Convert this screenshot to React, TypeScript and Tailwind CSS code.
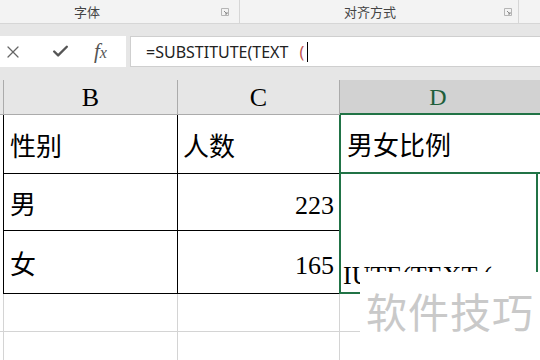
import { Check, X } from "lucide-react";

const SERIF = "font-['Liberation_Serif','Noto_Sans_CJK_SC',serif]";

function Launcher() {
  return (
    <svg width="8" height="8" viewBox="0 0 8 8" className="shrink-0">
      <path d="M0.5 0.5h7v7" fill="none" stroke="#b5b5b5" />
      <path d="M0.5 0.5v7h7" fill="none" stroke="#b5b5b5" />
      <path d="M3 3l3 3M6 4v2H4" fill="none" stroke="#8a8a8a" />
    </svg>
  );
}

function Ribbon() {
  return (
    <div className="flex h-[24px] bg-[#f3f3f3] border-b border-[#d6d6d6] text-[13px] text-[#444] font-['Noto_Sans_CJK_SC',sans-serif]">
      <div className="flex w-[240px] items-center border-r border-[#d6d6d6] pl-[74px] pr-[10px]">
        <span className="leading-none">字体</span>
        <span className="ml-auto">
          <Launcher />
        </span>
      </div>
      <div className="flex w-[279px] items-center border-r border-[#d6d6d6] pl-[104px] pr-[6px]">
        <span className="leading-none">对齐方式</span>
        <span className="ml-auto">
          <Launcher />
        </span>
      </div>
      <div className="flex-1" />
    </div>
  );
}

function FormulaBar() {
  return (
    <div className="flex h-[31px] bg-[#e6e6e6]">
      <div className="flex w-[126px] items-center bg-white text-[#666]">
        <X size={20} strokeWidth={1.5} className="ml-[3px]" />
        <Check size={19} strokeWidth={3} className="ml-[28px] text-[#555]" />
        <span className="ml-[24px] font-['Liberation_Serif',serif] text-[21px] italic text-[#555]">
          f<span className="text-[16px]">x</span>
        </span>
      </div>
      <div className="ml-[4px] flex flex-1 items-center border-y border-l border-[#cfcfcf] bg-white pl-[15px] font-['Noto_Sans',sans-serif] text-[16px] text-[#222]">
        <span>=SUBSTITUTE(TEXT</span>
        <span className="ml-[11px] text-[#c0504d]">(</span>
        <span className="ml-[3px] h-[20px] w-px bg-black" />
      </div>
    </div>
  );
}

function HeaderRow() {
  return (
    <div className={`flex h-[35px] bg-[#e6e6e6] text-[26px] ${SERIF} text-black`}>
      <div className="w-[4px] border-r border-b border-[#ababab]" />
      <div className="flex w-[174px] items-center justify-center border-r border-b border-[#ababab]">B</div>
      <div className="flex w-[162px] items-center justify-center border-r border-b border-[#ababab]">C</div>
      <div className="flex flex-1 items-center justify-center border-b-2 border-[#217346] bg-[#d2d2d2] pr-[4px] text-[24px] text-[#1e5e3a]">
        D
      </div>
    </div>
  );
}

type Row = { b: string; c: string; h: string };

const ROWS: Row[] = [
  { b: "性别", c: "人数", h: "h-[59px]" },
  { b: "男", c: "223", h: "h-[57px]" },
  { b: "女", c: "165", h: "h-[63px]" },
];

export default function App() {
  return (
    <div className="relative h-[360px] w-[540px] overflow-hidden bg-white">
      <Ribbon />
      <div className="h-[12px] bg-[#e6e6e6]" />
      <FormulaBar />
      <div className="h-[13px] bg-[#e6e6e6]" />
      <HeaderRow />

      <div className={`${SERIF} text-[26px] text-black`}>
        {ROWS.map((r, i) => (
          <div key={r.b} className={`flex ${r.h}`}>
            <div className="w-[4px] border-r border-black" />
            <div className="flex w-[174px] items-center border-r border-b border-black pl-[6px]">
              <span className="mt-[6px]">{r.b}</span>
            </div>
            <div
              className={`flex w-[162px] items-center border-r border-b border-black ${
                i === 0 ? "pl-[5px]" : "justify-end pr-[5px]"
              }`}
            >
              <span className="mt-[6px]">{r.c}</span>
            </div>
            {i === 0 && (
              <div className="-ml-px flex flex-1 items-center border-2 border-r-0 border-t-0 border-[#217346] pl-[6px]">
                <span className="mt-[6px]">男女比例</span>
              </div>
            )}
            {i === 1 && <div className="-ml-px mr-[2px] flex-1 border-x-2 border-[#217346]" />}
            {i === 2 && (
              <div className="-ml-px mr-[2px] flex flex-1 items-end overflow-hidden border-x-2 border-b-2 border-[#217346]">
                <span className="mb-[3px] ml-[2px] whitespace-nowrap font-['Liberation_Serif',serif] text-[26px] leading-none">
                  IUTE(TEXT (
                </span>
              </div>
            )}
          </div>
        ))}
        <div className="flex h-[38px]">
          <div className="w-[4px] border-r border-b border-[#d4d4d4]" />
          <div className="w-[174px] border-r border-b border-[#d4d4d4]" />
          <div className="w-[162px] border-r border-b border-[#d4d4d4]" />
          <div className="flex-1 border-b border-[#d4d4d4]" />
        </div>
        <div className="flex h-[40px]">
          <div className="w-[4px] border-r border-[#d4d4d4]" />
          <div className="w-[174px] border-r border-[#d4d4d4]" />
          <div className="w-[162px] border-r border-[#d4d4d4]" />
          <div className="flex-1" />
        </div>
      </div>

      <div className="absolute left-[360px] top-[272px] flex h-[88px] w-[180px] items-start justify-center bg-white pt-[18px]">
        <span className="font-['Noto_Sans_CJK_SC',sans-serif] text-[41px] leading-none tracking-[1px] text-[#c9c9c9]">
          软件技巧
        </span>
      </div>
    </div>
  );
}
